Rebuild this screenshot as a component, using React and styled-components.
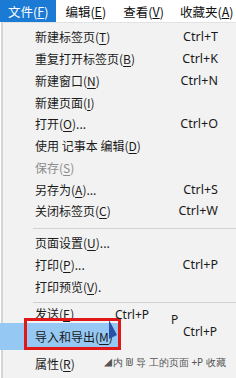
import React from 'react';
import styled, { createGlobalStyle } from 'styled-components';

const GlobalStyle = createGlobalStyle`
  html, body {
    margin: 0;
    padding: 0;
    background: #ffffff;
  }
  body {
    font-family: "Noto Sans CJK SC", "Liberation Sans", sans-serif;
  }
`;

const Screen = styled.div`
  width: 236px;
  height: 378px;
  overflow: hidden;
  position: relative;
  background: #ffffff;
`;

const MenuBar = styled.div`
  display: flex;
  height: 22px;
  align-items: stretch;
  background: #ffffff;
  font-size: 12.5px;
  color: #111;
`;

const BarItem = styled.div`
  display: flex;
  align-items: center;
  padding: 0 ${(p) => p.$pad || 8}px;
  background: ${(p) => (p.$active ? '#1a7ad4' : 'transparent')};
  color: ${(p) => (p.$active ? '#ffffff' : '#111')};
  white-space: nowrap;
`;

const Dropdown = styled.div`
  position: relative;
  background: #f2f2f2;
  border-left: 2px solid #d4d4d4;
  border-top: 1px solid #e2e2e2;
  margin-left: 1px;
  padding: 3px 0 0 0;
  height: 356px;
  box-sizing: border-box;
`;

const Row = styled.div`
  display: flex;
  align-items: center;
  height: ${(p) => p.$h || 21.75}px;
  padding: 0 18px 0 32px;
  font-size: 12px;
  color: ${(p) => (p.$disabled ? '#8c8c8c' : '#1a1a1a')};
  background: ${(p) =>
    p.$hot ? 'linear-gradient(to right, #95c8f2 0, #95c8f2 118px, transparent 118px)' : 'transparent'};
  margin-left: ${(p) => (p.$hot ? '-3px' : '0')};
  padding-left: ${(p) => (p.$hot ? '35px' : '32px')};
  white-space: nowrap;
`;

const Label = styled.span`
  flex: 1;
  u {
    text-decoration: underline;
    text-underline-offset: 2px;
  }
`;

const Key = styled.span`
  font-family: "Noto Sans", "Liberation Sans", sans-serif;
  font-size: 12.5px;
  color: #1a1a1a;
`;

const Separator = styled.div`
  height: 1px;
  background: #d2d2d2;
  margin: ${(p) => p.$m || '4px 0 4px 30px'};
`;

const RedBox = styled.div`
  position: absolute;
  left: 21px;
  top: 295px;
  width: 97px;
  height: 32px;
  border: 3px solid #e01818;
  box-sizing: border-box;
`;

const Glitch = styled.span`
  position: absolute;
  left: ${(p) => p.$x}px;
  top: ${(p) => p.$y}px;
  font-family: "Noto Sans", "Liberation Sans", sans-serif;
  font-size: ${(p) => p.$s || 12}px;
  color: ${(p) => p.$c || '#1a1a1a'};
  white-space: nowrap;
`;

const Cursor = styled.svg`
  position: absolute;
  left: 105px;
  top: 296px;
`;

const items = [
  { label: '新建标签页', key: 'T', shortcut: 'Ctrl+T' },
  { label: '重复打开标签页', key: 'B', shortcut: 'Ctrl+K' },
  { label: '新建窗口', key: 'N', shortcut: 'Ctrl+N' },
  { label: '新建页面', key: 'I' },
  { label: '打开', key: 'O', tail: '...', shortcut: 'Ctrl+O' },
  { label: '使用 记事本 编辑', key: 'D' },
  { label: '保存', key: 'S', disabled: true },
  { label: '另存为', key: 'A', tail: '...', shortcut: 'Ctrl+S' },
  { label: '关闭标签页', key: 'C', shortcut: 'Ctrl+W' },
  'sep',
  { label: '页面设置', key: 'U', tail: '...' },
  { label: '打印', key: 'P', tail: '...', shortcut: 'Ctrl+P' },
  { label: '打印预览', key: 'V', tail: '.' },
  'sep2',
];

const MenuRow = ({ label, k, tail, shortcut, disabled, hot, h }) => (
  <Row $disabled={disabled} $hot={hot} $h={h}>
    <Label>
      {label}(<u>{k}</u>){tail}
    </Label>
    {shortcut && <Key>{shortcut}</Key>}
  </Row>
);

export default function App() {
  return (
    <Screen>
      <GlobalStyle />
      <MenuBar>
        <BarItem $active $pad={8}>文件(<u>F</u>)</BarItem>
        <BarItem $pad={9}>编辑(<u>E</u>)</BarItem>
        <BarItem $pad={8}>查看(<u>V</u>)</BarItem>
        <BarItem $pad={8}>收藏夹(<u>A</u>)</BarItem>
      </MenuBar>
      <Dropdown>
        {items.map((it, i) =>
          it === 'sep' ? (
            <Separator key={i} $m="6px 0 3px 30px" />
          ) : it === 'sep2' ? (
            <Separator key={i} $m="5px 0 1px 30px" />
          ) : (
            <MenuRow
              key={i}
              label={it.label}
              k={it.key}
              tail={it.tail}
              shortcut={it.shortcut}
              disabled={it.disabled}
            />
          )
        )}
        <MenuRow label="发送" k="E" h={19} />
        <MenuRow label="导入和导出" k="M" hot h={27} />
        <MenuRow label="属性" k="R" h={26} />

        <RedBox />
        <Cursor width="10" height="22" viewBox="0 0 10 22">
          <path d="M1 1 L1 20 L9 16 Z" fill="#2a4fa8" />
        </Cursor>
        <Glitch $x={112} $y={283}>Ctrl+P</Glitch>
        <Glitch $x={168} $y={288}>P</Glitch>
        <Glitch $x={180} $y={300}>Ctrl+P</Glitch>
        <Glitch $x={100} $y={332} $s={10} $c="#555">◢内 ₪ 导 工的页面 +P 收藏</Glitch>
      </Dropdown>
    </Screen>
  );
}
